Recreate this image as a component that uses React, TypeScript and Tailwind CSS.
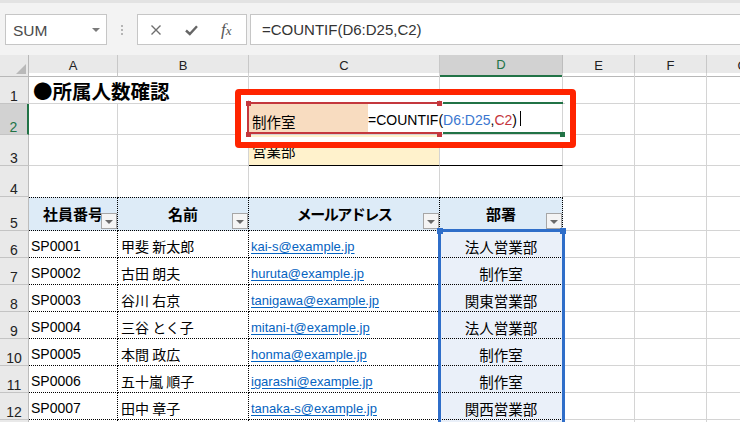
import React from "react";

const COLS = "grid grid-cols-[29px_89px_131px_191px_123px_72px_72px_72px]";
const GC = "border-r border-b border-[#d4d4d4]";
const JP = "font-['Noto_Sans_CJK_JP','Liberation_Sans',sans-serif]";
const DOT = "border-r border-b border-dotted border-black";

function RH({ n, sel }: { n?: number; sel?: boolean }) {
  return (
    <div
      className={`flex items-end justify-center border-b border-b-[#c4c4c4] text-[14px] leading-[14px] ${
        sel
          ? "bg-[#d2d2d2] text-[#217346] border-r-2 border-r-[#217346]"
          : "bg-[#e9e9e9] text-[#222] border-r border-r-[#bcbcbc]"
      }`}
    >
      {n}
    </div>
  );
}

function Filter() {
  return (
    <div className="absolute right-0 bottom-[1px] w-[16px] h-[16px] bg-[#f4f4f4] border border-[#a6a6a6] flex items-center justify-center">
      <div className="w-0 h-0 border-l-[4px] border-r-[4px] border-t-[4px] border-l-transparent border-r-transparent border-t-[#6a6a6a] mt-[1px]" />
    </div>
  );
}

const rows = [
  ["SP0001", "甲斐 新太郎", "kai-s@example.jp", "法人営業部"],
  ["SP0002", "古田 朗夫", "huruta@example.jp", "制作室"],
  ["SP0003", "谷川 右京", "tanigawa@example.jp", "関東営業部"],
  ["SP0004", "三谷 とく子", "mitani-t@example.jp", "法人営業部"],
  ["SP0005", "本間 政広", "honma@example.jp", "制作室"],
  ["SP0006", "五十嵐 順子", "igarashi@example.jp", "制作室"],
  ["SP0007", "田中 章子", "tanaka-s@example.jp", "関西営業部"],
];

export default function App() {
  return (
    <div className="relative w-[740px] h-[422px] overflow-hidden bg-white text-black font-['Liberation_Sans','Noto_Sans_CJK_JP',sans-serif]">
      {/* toolbar */}
      <div className="h-[55px] bg-[#f3f3f3] flex flex-col">
        <div className="h-[3px] bg-[#e3e3e3]" />
        <div className="flex items-start mt-[11px] pl-[5px]">
          <div className="w-[102px] h-[31px] bg-white border border-[#c6c6c6] flex items-center justify-between pl-[7px] pr-[6px]">
            <span className="text-[15.5px] text-[#4a4a4a] leading-[17px] mt-[2px]">SUM</span>
            <span className="w-0 h-0 border-l-[4px] border-r-[4px] border-t-[4px] border-l-transparent border-r-transparent border-t-[#7a7a7a]" />
          </div>
          <div className="w-[30px] h-[31px] flex flex-col items-center justify-center gap-[2px]">
            <span className="w-[2px] h-[2px] bg-[#b5b5b5]" />
            <span className="w-[2px] h-[2px] bg-[#b5b5b5]" />
            <span className="w-[2px] h-[2px] bg-[#b5b5b5]" />
          </div>
          <div className="w-[110px] h-[31px] bg-white border border-[#c6c6c6] flex items-center pl-[12px] gap-[23px]">
            <svg width="12" height="12" viewBox="0 0 12 12">
              <path d="M1.5 1.5 L10.5 10.5 M10.5 1.5 L1.5 10.5" stroke="#6e6e6e" strokeWidth="1.4" fill="none" />
            </svg>
            <svg width="13" height="12" viewBox="0 0 13 12">
              <path d="M1 6.5 L4.8 10 L12 2.2" stroke="#666" strokeWidth="2.4" fill="none" />
            </svg>
            <span className="font-['Liberation_Serif',serif] italic text-[#555] text-[17px] leading-[17px] whitespace-nowrap">
              f<span className="text-[13px]">x</span>
            </span>
          </div>
          <div className="flex-1 ml-[3px] h-[31px] bg-white border border-r-0 border-[#c6c6c6] flex items-center pl-[11px]">
            <span className="text-[15px] text-[#333] leading-[17px]">=COUNTIF(D6:D25,C2)</span>
          </div>
        </div>
      </div>

      {/* column headers */}
      <div className={`${COLS} h-[18px] bg-[#e9e9e9] text-[13px] text-[#222]`}>
        <div className="relative border-r border-b border-[#b8b8b8]">
          <div className="absolute right-[2px] bottom-[2px] w-0 h-0 border-l-[10px] border-l-transparent border-b-[10px] border-b-[#b9b9b9]" />
        </div>
        {["A", "B", "C"].map((l) => (
          <div key={l} className="flex items-center justify-center border-r border-b border-r-[#c8c8c8] border-b-[#b8b8b8]">
            {l}
          </div>
        ))}
        <div className="flex items-center justify-center bg-[#d2d2d2] border-r border-r-[#bdbdbd] border-b-2 border-b-[#217346] text-[#217346]">
          D
        </div>
        {["E", "F", "G"].map((l) => (
          <div key={l} className="flex items-center justify-center border-r border-b border-r-[#c8c8c8] border-b-[#b8b8b8]">
            {l}
          </div>
        ))}
      </div>

      {/* row 1 */}
      <div className={`${COLS} h-[31px]`}>
        <RH n={1} />
        <div className="border-b border-[#d4d4d4] flex items-end pl-[4px]">
          <span className={`${JP} whitespace-nowrap font-bold text-[19.5px] leading-[24px]`}>●所属人数確認</span>
        </div>
        <div className={GC} />
        <div className={GC} />
        <div className={GC} />
        <div className={GC} />
        <div className={GC} />
        <div className={GC} />
      </div>

      {/* row 2 */}
      <div className={`${COLS} h-[31px]`}>
        <RH n={2} sel />
        <div className={GC} />
        <div className={GC} />
        <div className="border-b border-[#d4d4d4] bg-[#f8dcc0] flex items-end pl-[3px] pb-[4px]">
          <span className={`${JP} text-[14.5px] leading-[17px]`}>制作室</span>
        </div>
        <div className={GC} />
        <div className={GC} />
        <div className={GC} />
        <div className={GC} />
      </div>

      {/* row 3 */}
      <div className={`${COLS} h-[31px]`}>
        <RH n={3} />
        <div className={GC} />
        <div className={GC} />
        <div className="border-r border-b border-r-[#d4d4d4] border-b-black bg-[#fff2cc] flex items-end pl-[3px] pb-[6px]">
          <span className={`${JP} text-[14.5px] leading-[17px]`}>営業部</span>
        </div>
        <div className="border-r border-b border-r-[#d4d4d4] border-b-black" />
        <div className={GC} />
        <div className={GC} />
        <div className={GC} />
      </div>

      {/* row 4 */}
      <div className={`${COLS} h-[31px]`}>
        <RH n={4} />
        <div className="border-r border-[#d4d4d4]" />
        <div className="border-r border-[#d4d4d4]" />
        <div className="border-r border-[#d4d4d4]" />
        <div className="border-r border-[#d4d4d4]" />
        <div className={GC} />
        <div className={GC} />
        <div className={GC} />
      </div>

      {/* row 5 header */}
      <div className={`${COLS} h-[34px]`}>
        <RH n={5} />
        {["社員番号", "名前", "メールアドレス", "部署"].map((h) => (
          <div
            key={h}
            className={`relative flex items-center justify-center bg-[#ddebf7] border-t border-r border-b border-dotted border-black ${JP} font-bold text-[15px] leading-[18px]`}
          >
            <span className={h === "メールアドレス" ? "tracking-[-1.5px]" : ""}>{h}</span>
            <Filter />
          </div>
        ))}
        <div className={GC} />
        <div className={GC} />
        <div className={GC} />
      </div>

      {/* data rows */}
      {rows.map((r, i) => (
        <div key={i} className={`${COLS} h-[27px]`}>
          <RH n={6 + i} />
          <div className={`${DOT} flex items-end pl-[2px] pb-[2px]`}>
            <span className="text-[14px] leading-[17px] whitespace-nowrap">{r[0]}</span>
          </div>
          <div className={`${DOT} flex items-end pl-[3px] pb-[2px]`}>
            <span className={`${JP} text-[14px] leading-[17px] whitespace-nowrap`}>{r[1]}</span>
          </div>
          <div className={`${DOT} flex items-end pl-[2px] pb-[2px]`}>
            <span className="text-[13px] leading-[17px] text-[#0563c1] underline underline-offset-2 whitespace-nowrap">
              {r[2]}
            </span>
          </div>
          <div className={`${DOT} bg-[#eaf0f9] flex items-end justify-center pb-[2px]`}>
            <span className={`${JP} text-[14.5px] leading-[17px] whitespace-nowrap`}>{r[3]}</span>
          </div>
          <div className={GC} />
          <div className={GC} />
          <div className={GC} />
        </div>
      ))}

      {/* row 13 (partially visible) */}
      <div className={`${COLS} h-[27px]`}>
        <RH />
        <div className={DOT} />
        <div className={DOT} />
        <div className={DOT} />
        <div className={`${DOT} bg-[#eaf0f9]`} />
        <div className={GC} />
        <div className={GC} />
        <div className={GC} />
      </div>

      {/* in-cell edit box for D2 */}
      <div className="absolute left-[368px] top-[104px] w-[194px] h-[28px] bg-white flex items-center pt-[4px]">
        <span className="text-[14px] leading-[17px] whitespace-nowrap">
          =COUNTIF(<span className="text-[#3a76cf]">D6:D25</span>,<span className="text-[#c4343d]">C2</span>)
        </span>
        <span className="w-px h-[15px] bg-black ml-[3px] mt-[-3px]" />
      </div>

      {/* C2 reference frame */}
      <div className="absolute left-[247px] top-[102px] w-[193px] h-[32px] border-t-2 border-b-2 border-l-2 border-[#c4383d]" />
      <div className="absolute left-[246px] top-[101px] w-[5px] h-[5px] bg-[#c4383d]" />
      <div className="absolute left-[246px] top-[132px] w-[5px] h-[5px] bg-[#c4383d]" />
      <div className="absolute left-[437px] top-[101px] w-[5px] h-[5px] bg-[#c4383d]" />
      <div className="absolute left-[437px] top-[132px] w-[5px] h-[5px] bg-[#c4383d]" />

      {/* D2 active cell frame */}
      <div className="absolute left-[443px] top-[102px] w-[120px] h-[32px] border-t-2 border-b-2 border-[#217346]" />
      <div className="absolute left-[560px] top-[132px] w-[5px] h-[5px] bg-[#217346]" />

      {/* D6:D25 reference range */}
      <div className="absolute left-[438px] top-[229px] w-[127px] h-[200px] border-t-[3px] border-l-[3px] border-r-[3px] border-[#2f6ec9]" />
      <div className="absolute left-[437px] top-[228px] w-[6px] h-[6px] bg-[#2f6ec9]" />
      <div className="absolute left-[560px] top-[228px] w-[6px] h-[6px] bg-[#2f6ec9]" />

      {/* red annotation box */}
      <div className="absolute left-[235px] top-[89px] w-[341px] h-[59px] border-[6px] border-[#ff2400] rounded-[4px] shadow-[inset_0_0_0_5px_#ffffff]" />
    </div>
  );
}
